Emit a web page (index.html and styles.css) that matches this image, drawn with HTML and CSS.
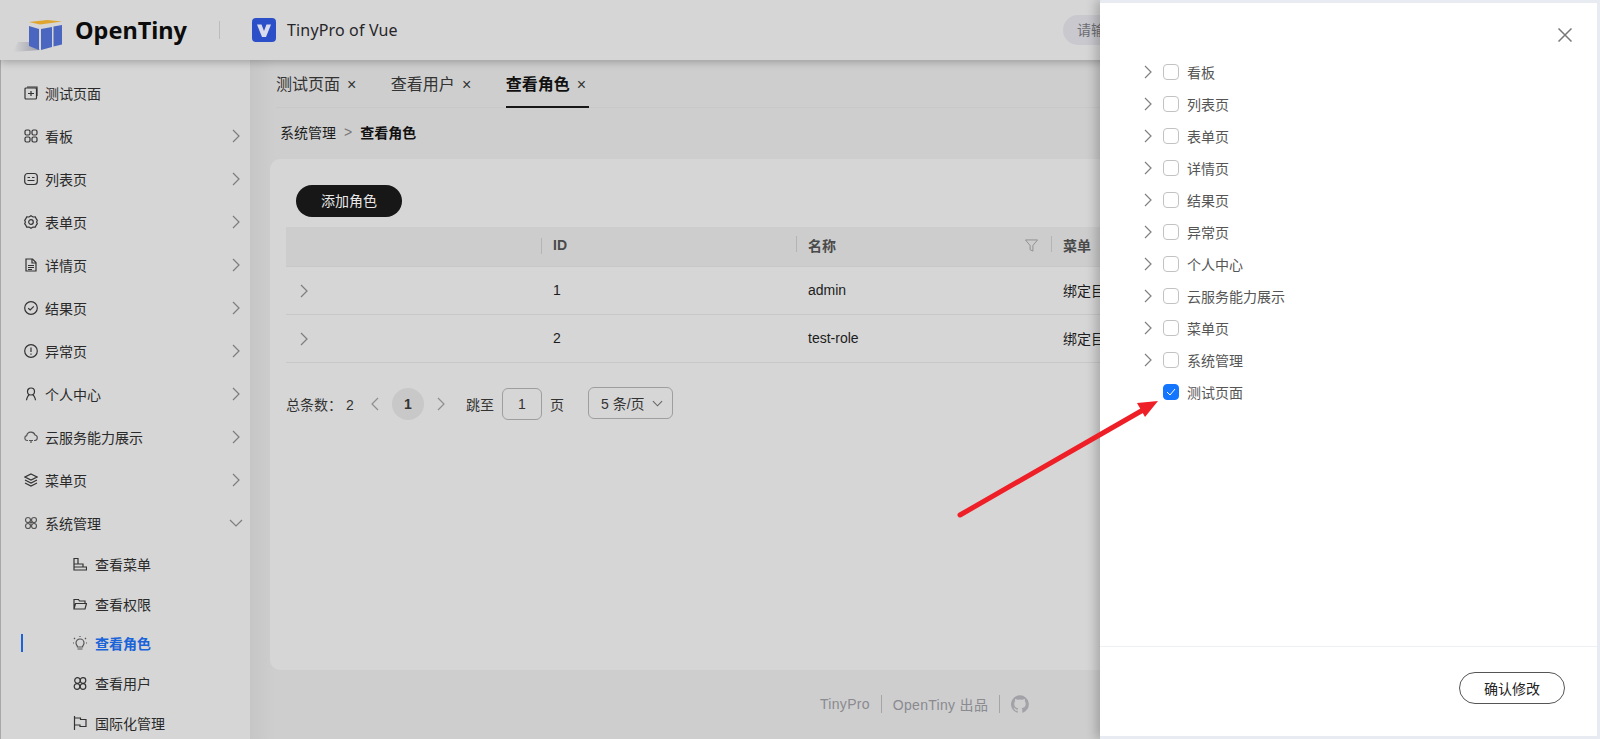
FILE: index.html
```html
<!DOCTYPE html>
<html lang="en">
<head>
  <meta charset="UTF-8">
  <meta name="viewport" content="width=device-width, initial-scale=1.0">
  <title>TinyPro of Vue</title>
  <link rel="stylesheet" href="styles.css">
</head>
<body>
  <header class="topbar">
    <svg class="logo" width="62" height="48" viewBox="0 0 62 48">
      <defs>
        <linearGradient id="logoShadow" x1="0" x2="1" y1="0" y2="0">
          <stop offset="0" stop-color="#d6d6d6"/>
          <stop offset="1" stop-color="#9a9ca8"/>
        </linearGradient>
      </defs>
      <polygon points="13,46 18,36 32,36 40,44" fill="url(#logoShadow)"/>
      <polygon points="29,16 47,14 62,15.5 40,18.5" fill="#dfa52e"/>
      <polygon points="29,20 39,23 39,44 29,40" fill="#4a66c0"/>
      <polygon points="41,23 52,21 52,41 41,44" fill="#4a66c0"/>
      <polygon points="53.500,20.500 62,19 62,38.500 53.500,40.500" fill="#4a66c0"/>
    </svg>
    <span class="brand">OpenTiny</span>
    <span class="brand-sep"></span>
    <svg class="app-icon" width="24" height="24" viewBox="0 0 24 24">
      <rect width="24" height="24" rx="4" fill="#2b4fc9"/>
      <polygon points="5,6.500 9.500,6.500 12,13 14.500,6.500 19,6.500 14,19 10,19" fill="#d9dcec"/>
    </svg>
    <span class="app-name">TinyPro of Vue</span>
    <div class="search">请输入</div>
  </header>

  <div class="main">
    <aside class="sidebar">
      <div class="menu-item">
        <svg class="icon" viewBox="0 0 14 14"><rect x="1" y="2" width="11.500" height="11" rx="1"/><path d="M3 1h10v9M4 7.500h6M7 5v5"/></svg>
        <span>测试页面</span>
      </div>
      <div class="menu-item">
        <svg class="icon" viewBox="0 0 14 14"><rect x="1" y="1" width="5" height="5" rx="1.500"/><rect x="8" y="1" width="5" height="5" rx="1.500"/><rect x="1" y="8" width="5" height="5" rx="1.500"/><rect x="8" y="8" width="5" height="5" rx="1.500"/></svg>
        <span>看板</span>
        <svg class="caret" viewBox="0 0 8 14"><path d="M1 1l6 6-6 6"/></svg>
      </div>
      <div class="menu-item">
        <svg class="icon" viewBox="0 0 14 14"><rect x="0.700" y="1.500" width="12.600" height="11" rx="3"/><path d="M3.500 5.500h2.500M8 5.500h2.500M3.500 8.500h7"/></svg>
        <span>列表页</span>
        <svg class="caret" viewBox="0 0 8 14"><path d="M1 1l6 6-6 6"/></svg>
      </div>
      <div class="menu-item">
        <svg class="icon" viewBox="0 0 14 14"><path d="M7 .8l2 1.200 2.300-.1 1 2 1 1.500-.7 1.600.7 1.600-1 1.500-1 2-2.300-.1-2 1.200-2-1.200-2.300.1-1-2-1-1.500.7-1.600-.7-1.600 1-1.500 1-2 2.300.1z"/><circle cx="7" cy="7" r="2.300"/></svg>
        <span>表单页</span>
        <svg class="caret" viewBox="0 0 8 14"><path d="M1 1l6 6-6 6"/></svg>
      </div>
      <div class="menu-item">
        <svg class="icon" viewBox="0 0 14 14"><path d="M2 1h6.500L12 4.500V13H2z"/><path d="M8 1v4h4M4 7.500h6M4 9.500h6M4 11.500h4"/></svg>
        <span>详情页</span>
        <svg class="caret" viewBox="0 0 8 14"><path d="M1 1l6 6-6 6"/></svg>
      </div>
      <div class="menu-item">
        <svg class="icon" viewBox="0 0 14 14"><circle cx="7" cy="7" r="6.300"/><path d="M4.200 7.200l2 1.800 3.600-3.600"/></svg>
        <span>结果页</span>
        <svg class="caret" viewBox="0 0 8 14"><path d="M1 1l6 6-6 6"/></svg>
      </div>
      <div class="menu-item">
        <svg class="icon" viewBox="0 0 14 14"><circle cx="7" cy="7" r="6.300"/><path d="M7 3.500v4.500M7 9.500v1.300"/></svg>
        <span>异常页</span>
        <svg class="caret" viewBox="0 0 8 14"><path d="M1 1l6 6-6 6"/></svg>
      </div>
      <div class="menu-item">
        <svg class="icon" viewBox="0 0 14 14"><circle cx="7" cy="4.500" r="3.500"/><path d="M2.500 13.300c.3-3 2-5.300 2.800-5.500M11.500 13.300c-.3-3-2-5.300-2.800-5.500"/></svg>
        <span>个人中心</span>
        <svg class="caret" viewBox="0 0 8 14"><path d="M1 1l6 6-6 6"/></svg>
      </div>
      <div class="menu-item">
        <svg class="icon icon-small" viewBox="0 0 14 14"><path d="M4 10.500H3A2.500 2.500 0 0 1 2.700 5.600 4.300 4.300 0 0 1 11 5a2.800 2.800 0 0 1 0 5.500h-1M5 10.500h4M7 10.500v2.500"/></svg>
        <span>云服务能力展示</span>
        <svg class="caret" viewBox="0 0 8 14"><path d="M1 1l6 6-6 6"/></svg>
      </div>
      <div class="menu-item">
        <svg class="icon" viewBox="0 0 14 14"><path d="M7 1l6 3-6 3-6-3zM1 7l6 3 6-3M1 10l6 3 6-3"/></svg>
        <span>菜单页</span>
        <svg class="caret" viewBox="0 0 8 14"><path d="M1 1l6 6-6 6"/></svg>
      </div>
      <div class="menu-item">
        <svg class="icon icon-small" viewBox="0 0 14 14"><circle cx="4" cy="4" r="2.500"/><circle cx="10" cy="4" r="2.500"/><circle cx="4" cy="10" r="2.500"/><circle cx="10" cy="10" r="2.500"/><path d="M5.500 5.500l3 3M8.500 5.500l-3 3"/></svg>
        <span>系统管理</span>
        <svg class="caret caret-open" viewBox="0 0 14 8"><path d="M1 1l6 6 6-6"/></svg>
      </div>
      <div class="sub-item">
        <svg class="icon" viewBox="0 0 14 14"><path d="M1 1.500h4V7H1zM1 7h9v3H1zM1 10h12.500v3H1z"/></svg>
        <span>查看菜单</span>
      </div>
      <div class="sub-item">
        <svg class="icon" viewBox="0 0 14 14"><path d="M1 12V2.500h4.500l1 1.500H12v2.500M1 12l1.500-5.500h11L12 12z"/></svg>
        <span>查看权限</span>
      </div>
      <div class="sub-item sub-item-active">
        <svg class="icon icon-small" viewBox="0 0 14 14"><path d="M4.500 11c0-1.500-1.500-2-1.500-4a4 4 0 0 1 8 0c0 2-1.500 2.500-1.500 4zM4.500 13h5M7 0v1M1 2l1 1M13 2l-1 1M0 7h1M13 7h1"/></svg>
        <span>查看角色</span>
      </div>
      <div class="sub-item">
        <svg class="icon" viewBox="0 0 14 14"><circle cx="4.500" cy="4.500" r="2.800"/><circle cx="10" cy="4.500" r="2.800"/><circle cx="4" cy="10.500" r="2.800"/><circle cx="10" cy="10.500" r="2.800"/></svg>
        <span>查看用户</span>
      </div>
      <div class="sub-item">
        <svg class="icon" viewBox="0 0 14 14"><path d="M1.500 0v14M1.500 2h6v1.500H13v7H7V9H1.500"/></svg>
        <span>国际化管理</span>
      </div>
    </aside>

    <section class="content">
      <div class="tabs">
        <div class="tab">测试页面<span class="tab-close">×</span></div>
        <div class="tab">查看用户<span class="tab-close">×</span></div>
        <div class="tab tab-active">查看角色<span class="tab-close">×</span></div>
      </div>
      <div class="crumbs">
        <span>系统管理</span>
        <span class="crumb-sep">&gt;</span>
        <b>查看角色</b>
      </div>

      <div class="card">
        <button class="btn-add">添加角色</button>
        <div class="table">
          <div class="row row-head">
            <div class="cell"></div>
            <div class="cell"><i class="col-sep"></i>ID</div>
            <div class="cell"><i class="col-sep"></i>名称
              <svg class="filter" viewBox="0 0 14 14"><path d="M.5 1h13L8.500 7v6l-3-1.500V7z"/></svg>
            </div>
            <div class="cell"><i class="col-sep"></i>菜单</div>
          </div>
          <div class="row">
            <div class="cell"><svg class="row-caret" viewBox="0 0 8 14"><path d="M1 1l6 6-6 6"/></svg></div>
            <div class="cell">1</div>
            <div class="cell">admin</div>
            <div class="cell">绑定目录</div>
          </div>
          <div class="row">
            <div class="cell"><svg class="row-caret" viewBox="0 0 8 14"><path d="M1 1l6 6-6 6"/></svg></div>
            <div class="cell">2</div>
            <div class="cell">test-role</div>
            <div class="cell">绑定目录</div>
          </div>
        </div>

        <div class="pager">
          <span class="pager-total">总条数： 2</span>
          <svg class="pager-arrow" viewBox="0 0 8 14"><path d="M7 1L1 7l6 6"/></svg>
          <span class="pager-num">1</span>
          <svg class="pager-arrow" viewBox="0 0 8 14"><path d="M1 1l6 6-6 6"/></svg>
          <span class="pager-jump">跳至</span>
          <span class="pager-input">1</span>
          <span>页</span>
          <span class="pager-size">5 条/页
            <svg class="size-caret" viewBox="0 0 12 7"><path d="M1 1l5 5 5-5"/></svg>
          </span>
        </div>
      </div>

      <footer class="foot">
        <span>TinyPro</span>
        <i class="foot-sep"></i>
        <span>OpenTiny 出品</span>
        <i class="foot-sep"></i>
        <svg class="github" viewBox="0 0 16 16"><path d="M8 .2a8 8 0 0 0-2.500 15.600c.4.100.5-.2.500-.4v-1.400c-2.200.5-2.700-1-2.700-1-.4-.9-.9-1.200-.9-1.200-.7-.5.100-.5.100-.5.800.1 1.200.8 1.200.8.700 1.200 1.900.9 2.300.7.100-.5.300-.9.500-1.100-1.800-.2-3.600-.9-3.600-4 0-.9.300-1.600.8-2.100-.1-.2-.4-1 .1-2.100 0 0 .7-.2 2.200.8a7.600 7.600 0 0 1 4 0c1.500-1 2.200-.8 2.200-.8.400 1.100.2 1.900.1 2.100.5.600.8 1.300.8 2.100 0 3.100-1.900 3.700-3.700 3.900.3.300.6.700.6 1.500v2.200c0 .2.100.5.600.4A8 8 0 0 0 8 .2z"/></svg>
      </footer>
    </section>
  </div>

  <aside class="drawer">
    <div class="drawer-top">
      <svg class="drawer-close" viewBox="0 0 14 14"><path d="M.5.500l13 13M13.500.500l-13 13"/></svg>
    </div>
    <div class="tree">
      <div class="tree-row"><svg class="tree-caret" viewBox="0 0 8 14"><path d="M1 1l6 6-6 6"/></svg><i class="check"></i>看板</div>
      <div class="tree-row"><svg class="tree-caret" viewBox="0 0 8 14"><path d="M1 1l6 6-6 6"/></svg><i class="check"></i>列表页</div>
      <div class="tree-row"><svg class="tree-caret" viewBox="0 0 8 14"><path d="M1 1l6 6-6 6"/></svg><i class="check"></i>表单页</div>
      <div class="tree-row"><svg class="tree-caret" viewBox="0 0 8 14"><path d="M1 1l6 6-6 6"/></svg><i class="check"></i>详情页</div>
      <div class="tree-row"><svg class="tree-caret" viewBox="0 0 8 14"><path d="M1 1l6 6-6 6"/></svg><i class="check"></i>结果页</div>
      <div class="tree-row"><svg class="tree-caret" viewBox="0 0 8 14"><path d="M1 1l6 6-6 6"/></svg><i class="check"></i>异常页</div>
      <div class="tree-row"><svg class="tree-caret" viewBox="0 0 8 14"><path d="M1 1l6 6-6 6"/></svg><i class="check"></i>个人中心</div>
      <div class="tree-row"><svg class="tree-caret" viewBox="0 0 8 14"><path d="M1 1l6 6-6 6"/></svg><i class="check"></i>云服务能力展示</div>
      <div class="tree-row"><svg class="tree-caret" viewBox="0 0 8 14"><path d="M1 1l6 6-6 6"/></svg><i class="check"></i>菜单页</div>
      <div class="tree-row"><svg class="tree-caret" viewBox="0 0 8 14"><path d="M1 1l6 6-6 6"/></svg><i class="check"></i>系统管理</div>
      <div class="tree-row tree-leaf">
        <i class="check check-on"><svg viewBox="0 0 10 8"><path d="M1 4l3 3 5-6"/></svg></i>测试页面
      </div>
    </div>
    <div class="drawer-foot">
      <button class="btn-confirm">确认修改</button>
    </div>
  </aside>

  <!-- red annotation arrow drawn on top of the screenshot -->
  <svg class="note-arrow" width="220" height="130" viewBox="0 0 220 130">
    <path d="M3 125L186 20" stroke="#ee1f27" stroke-width="5" stroke-linecap="round" fill="none"/>
    <polygon points="201,11 180,13 188,27" fill="#ee1f27"/>
  </svg>
</body>
</html>
```

FILE: styles.css
```css
* {
  box-sizing: border-box;
}
body {
  margin: 0;
  height: 739px;
  overflow: hidden;
  background: #cdcdcd;
  color: #1c1c1c;
  font-family: "Liberation Sans", "Noto Sans CJK SC", sans-serif;
  font-size: 14px;
}
svg {
  display: block;
  flex: none;
}

/* top bar */
.topbar {
  position: relative;
  z-index: 2;
  height: 60px;
  display: flex;
  align-items: center;
  background: #d6d6d6;
  box-shadow: 0 2px 8px rgba(0,0,0,0.25);
}
.logo {
  margin-right: 13px;
}
.brand {
  font-family: "Noto Sans", sans-serif;
  font-size: 23.500px;
  font-weight: 700;
  color: #0c0c0c;
}
.brand-sep {
  width: 1px;
  height: 18px;
  margin: 0 32px 0 32px;
  background: #bcbcbc;
}
.app-icon {
  margin-right: 11px;
}
.app-name {
  font-family: "Noto Sans", sans-serif;
  font-size: 16px;
  letter-spacing: 0.15px;
  color: #26262a;
}
.search {
  margin-left: auto;
  margin-right: 477px;
  width: 60px;
  height: 30px;
  padding-left: 14px;
  line-height: 30px;
  font-size: 14px;
  color: #6d6d72;
  background: #c8c8ce;
  border-radius: 15px 0 0 15px;
  white-space: nowrap;
  overflow: hidden;
}

/* sidebar */
.main {
  display: flex;
  height: 679px;
}
.sidebar {
  flex: none;
  width: 250px;
  padding-top: 11px;
  background: #d6d6d6;
  border-left: 1px solid #a8a8a8;
  overflow: hidden;
}
.menu-item {
  height: 43px;
  display: flex;
  align-items: center;
  padding-left: 23px;
}
.menu-item span,
.sub-item span {
  margin-left: 7px;
  color: #2a2a2a;
}
.icon {
  width: 14px;
  height: 14px;
  fill: none;
  stroke: #333;
  stroke-width: 1.2;
}
.icon-small {
  stroke: #555;
}
.caret {
  width: 8px;
  height: 14px;
  margin-left: auto;
  margin-right: 10px;
  fill: none;
  stroke: #7d7d7d;
  stroke-width: 1.2;
}
.caret-open {
  width: 14px;
  height: 8px;
  margin-right: 7px;
}
.sub-item {
  position: relative;
  height: 39.700px;
  display: flex;
  align-items: center;
  padding-left: 72px;
}
.sub-item span {
  margin-left: 8px;
}
.sub-item-active span {
  color: #1a63d8;
  font-weight: 700;
}
.sub-item-active::before {
  content: "";
  position: absolute;
  left: 20px;
  top: 11px;
  width: 2px;
  height: 18px;
  background: #1a63d8;
}

/* tabs and breadcrumb */
.content {
  flex: 1;
  min-width: 0;
  display: flex;
  flex-direction: column;
  padding-left: 20px;
  background: linear-gradient(to right, #c6c6c6, #cecece 25px);
}
.tabs {
  display: flex;
  margin-left: 6px;
  height: 48px;
  border-bottom: 1px solid #c8c8c8;
}
.tab {
  height: 48px;
  display: flex;
  padding-top: 13px;
  margin-right: 34.500px;
  font-size: 16px;
  line-height: 24px;
  color: #333;
}
.tab-close {
  margin-left: 7px;
  font-size: 16px;
  color: #333;
}
.tab-active {
  padding-right: 3px;
  border-bottom: 2px solid #171717;
  color: #111;
  font-weight: 700;
}
.tab-active .tab-close {
  font-weight: 400;
}
.crumbs {
  height: 51px;
  display: flex;
  align-items: center;
  padding: 0 0 4px 10px;
}
.crumb-sep {
  margin: 0 8px;
  color: #777;
}
.crumbs b {
  color: #111;
}

/* card */
.card {
  height: 511px;
  padding: 26px 0 0 16px;
  background: #d6d6d6;
  border-radius: 10px 0 0 10px;
}
.btn-add {
  display: block;
  width: 106px;
  height: 32px;
  margin: 0 0 10px 10px;
  padding: 0 0 2px;
  border: none;
  border-radius: 16px;
  background: #171717;
  color: #e8e8e8;
  font: inherit;
}
.table {
  font-size: 14px;
}
.row {
  display: grid;
  grid-template-columns: 255px 255px 255px 1fr;
  height: 48px;
  padding-bottom: 2px;
  align-items: center;
  border-bottom: 1px solid #c8c8c8;
  white-space: nowrap;
  overflow: hidden;
}
.row-head {
  height: 40px;
  padding-bottom: 3px;
  background: #cdcdcd;
  font-weight: 700;
  color: #4a4a4a;
}
.cell {
  position: relative;
  display: flex;
  align-items: center;
  padding-left: 12px;
}
.col-sep {
  position: absolute;
  left: 0;
  top: 1px;
  width: 1px;
  height: 16px;
  background: #b4b4b4;
}
.row-caret {
  width: 8px;
  height: 14px;
  margin: 2px 0 0 2px;
  fill: none;
  stroke: #7d7d7d;
  stroke-width: 1.200;
}
.filter {
  width: 13px;
  height: 13px;
  margin-left: auto;
  margin-right: 13px;
  fill: none;
  stroke: #8c8c8c;
}

/* pagination */
.pager {
  display: flex;
  align-items: center;
  height: 32px;
  margin-top: 25px;
  color: #333;
}
.pager-total {
  width: 85px;
  white-space: nowrap;
}
.pager-arrow {
  width: 8px;
  height: 14px;
  fill: none;
  stroke: #8e8e8e;
  stroke-width: 1.200;
}
.pager-num {
  width: 32px;
  height: 32px;
  margin: 0 13px;
  line-height: 32px;
  text-align: center;
  font-weight: 700;
  background: #c8c8c8;
  border-radius: 50%;
}
.pager-jump {
  margin-left: 21px;
  margin-right: 8px;
}
.pager-input {
  width: 40px;
  height: 32px;
  margin-right: 8px;
  line-height: 30px;
  text-align: center;
  border: 1px solid #9e9e9e;
  border-radius: 6px;
}
.pager-size {
  display: flex;
  align-items: center;
  height: 32px;
  width: 85px;
  margin-left: 24px;
  margin-top: -2px;
  padding-left: 12px;
  border: 1px solid #9e9e9e;
  border-radius: 6px;
  white-space: nowrap;
}
.size-caret {
  width: 11px;
  height: 7px;
  margin-left: 7px;
  fill: none;
  stroke: #666;
  stroke-width: 1.200;
}

/* footer */
.foot {
  height: 69px;
  display: flex;
  align-items: center;
  padding-left: 550px;
  padding-bottom: 2px;
  color: #8a8a90;
  font-size: 14px;
  letter-spacing: 0.3px;
}
.foot-sep {
  width: 1px;
  height: 18px;
  margin: 0 11px;
  background: #a5a5a5;
}
.github {
  width: 18px;
  height: 18px;
  fill: #a2a2a8;
}

/* drawer */
.drawer {
  position: absolute;
  z-index: 3;
  top: 0;
  right: 0;
  width: 500px;
  height: 739px;
  display: flex;
  flex-direction: column;
  background: #fff;
  border: solid #e8ecf2;
  border-width: 3px 3px 3px 0;
  box-shadow: -4px 0 10px rgba(0,0,0,0.22);
}
.drawer-top {
  height: 53px;
  padding: 25px 0 0 458px;
}
.drawer-close {
  width: 14px;
  height: 14px;
  fill: none;
  stroke: #777;
  stroke-width: 1.500;
}
.tree {
  flex: 1;
  padding-left: 44px;
}
.tree-row {
  height: 32px;
  display: flex;
  align-items: center;
  color: #555;
  font-size: 14px;
}
.tree-caret {
  width: 8px;
  height: 14px;
  margin-right: 11px;
  fill: none;
  stroke: #808080;
  stroke-width: 1.200;
}
.tree-leaf {
  padding-left: 19px;
}
.check {
  width: 16px;
  height: 16px;
  margin-right: 8px;
  border: 1px solid #c2c2c2;
  border-radius: 4px;
}
.check-on {
  display: flex;
  align-items: center;
  justify-content: center;
  border-color: #1476ff;
  background: #1476ff;
}
.check-on svg {
  width: 10px;
  height: 8px;
  fill: none;
  stroke: #fff;
}
.drawer-foot {
  height: 90px;
  display: flex;
  justify-content: flex-end;
  padding: 25px 32px 0 0;
  border-top: 1px solid #eef0f3;
}
.btn-confirm {
  width: 106px;
  height: 32px;
  padding: 0;
  background: #fff;
  border: 1px solid #555;
  border-radius: 16px;
  color: #222;
  font: inherit;
}

.note-arrow {
  position: absolute;
  z-index: 4;
  left: 957px;
  top: 390px;
}
```
